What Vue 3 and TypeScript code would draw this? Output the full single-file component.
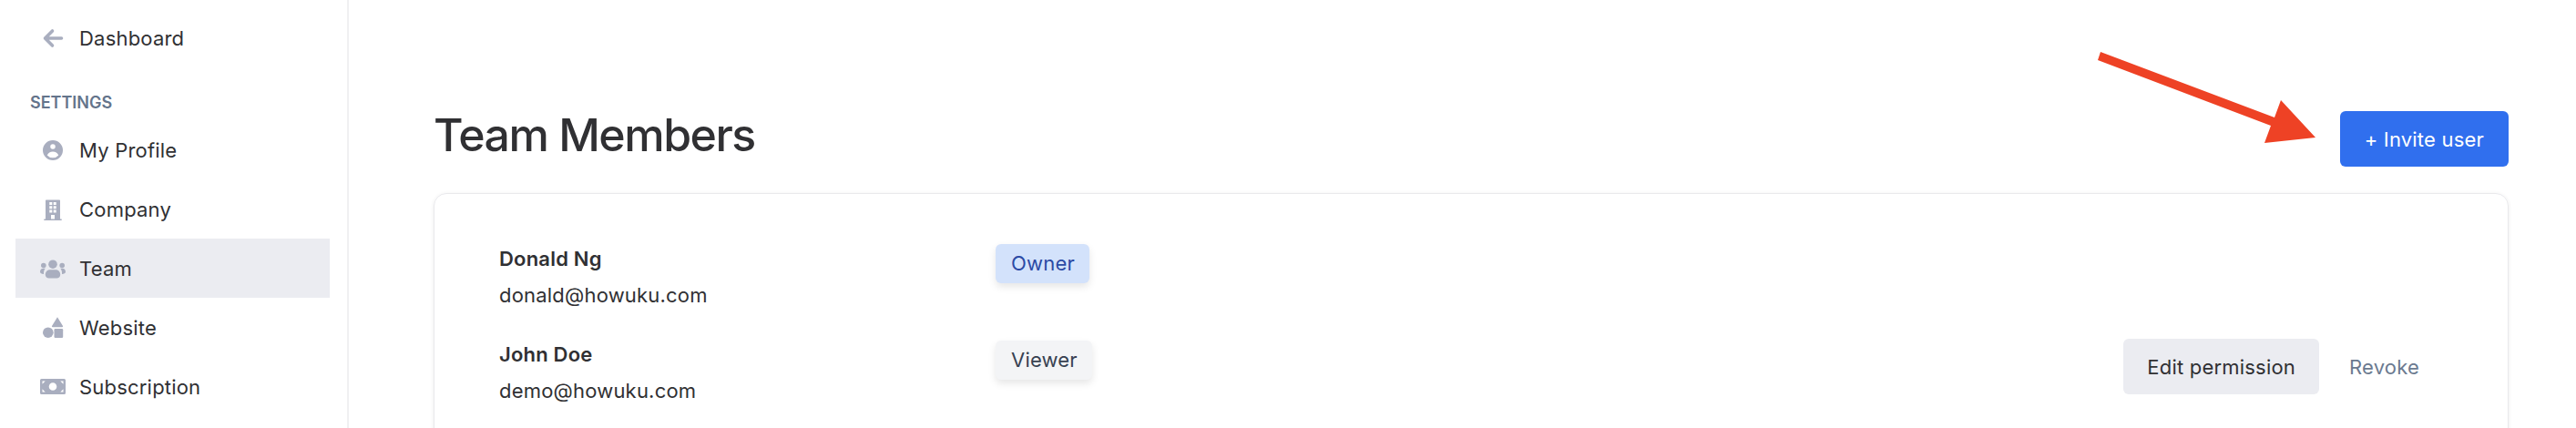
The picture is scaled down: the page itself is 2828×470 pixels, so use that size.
<script setup lang="ts">
const navItems = [
  { label: 'My Profile', icon: 'profile' },
  { label: 'Company', icon: 'company' },
  { label: 'Team', icon: 'team', active: true },
  { label: 'Website', icon: 'website' },
  { label: 'Subscription', icon: 'subscription' },
]

const members = [
  { name: 'Donald Ng', email: 'donald@howuku.com', role: 'Owner', owner: true },
  { name: 'John Doe', email: 'demo@howuku.com', role: 'Viewer', owner: false },
]
</script>

<template>
  <div class="page">
    <aside class="sidebar">
      <a class="nav-row back">
        <svg class="icon" viewBox="0 0 28 28">
          <path d="M13.5 6 5.5 14l8 8M6 14h17.5" fill="none" stroke="currentColor" stroke-width="3.6" stroke-linecap="round" stroke-linejoin="round" />
        </svg>
        Dashboard
      </a>
      <div class="section-label">SETTINGS</div>
      <a v-for="item in navItems" :key="item.label" class="nav-row" :class="{ active: item.active }">
        <svg class="icon" viewBox="0 0 28 28" fill="currentColor">
          <g v-if="item.icon === 'profile'" transform="translate(0.25 0.25) scale(1.375)">
            <path fill-rule="evenodd" d="M18 10a8 8 0 11-16 0 8 8 0 0116 0zm-6-3a2 2 0 11-4 0 2 2 0 014 0zm-2 4a5 5 0 00-4.546 2.916A5.986 5.986 0 0010 16a5.986 5.986 0 004.546-2.084A5 5 0 0010 11z" />
          </g>
          <g v-else-if="item.icon === 'company'">
            <path fill-rule="evenodd" d="M6.800 3.500h14.400a.8.8 0 0 1 .8.800V24.400h1.700V26H4.300v-1.600H6V4.300a.8.8 0 0 1 .8-.8zM10.300 6v3h3V6zm4.400 0v3h3V6zm-4.400 4.300v3h3v-3zm4.400 0v3h3v-3zm-4.400 4.300v3h3v-3zm4.400 0v3h3v-3zM12 20v4.400h4V20z" />
          </g>
          <g v-else-if="item.icon === 'team'">
            <circle cx="14" cy="9.200" r="4.800" />
            <circle cx="3.800" cy="10.500" r="2.800" />
            <circle cx="24.200" cy="10.500" r="2.800" />
            <path d="M5.800 20.500c0-3.400 2.600-5.300 5.200-5.300h6c2.600 0 5.200 1.900 5.200 5.300 0 2.600-1.700 4-4 4H9.800c-2.300 0-4-1.400-4-4z" />
            <path d="M0 17.600c0-2.300 1.500-3.800 3.400-3.800h2.400c-1.200 1.200-1.800 2.900-1.800 4.800v1.300c-2.400-.1-4-.6-4-2.300z" />
            <path d="M28 17.600c0-2.300-1.500-3.800-3.400-3.800h-2.400c1.200 1.200 1.800 2.900 1.800 4.800v1.300c2.400-.1 4-.6 4-2.300z" />
          </g>
          <g v-else-if="item.icon === 'website'">
            <path d="M19 2.200 25 12a.8.8 0 0 1-.7 1.200H13.700a.8.8 0 0 1-.7-1.200z" />
            <circle cx="8.800" cy="19.200" r="5.800" />
            <rect x="15.500" y="15" width="9.700" height="10" rx="1.200" />
          </g>
          <g v-else>
            <path fill-rule="evenodd" d="M1.500 5h25A1.500 1.500 0 0 1 28 6.500v14a1.500 1.500 0 0 1-1.500 1.500h-25A1.500 1.500 0 0 1 0 20.500v-14A1.500 1.500 0 0 1 1.500 5zM14 9.200a4.300 4.300 0 1 0 0 8.600 4.300 4.300 0 0 0 0-8.600zM2.500 7.500v3.200l3.200-3.200zm23 0h-3.200l3.200 3.200zm-23 12h3.200l-3.200-3.200zm23 0v-3.200l-3.200 3.200z" />
          </g>
        </svg>
        {{ item.label }}
      </a>
    </aside>

    <main class="content">
      <header class="heading">
        <h1>Team Members</h1>
        <button class="invite">+ Invite user</button>
      </header>

      <section class="card">
        <div v-for="member in members" :key="member.email" class="member">
          <div class="identity">
            <div class="name">{{ member.name }}</div>
            <div class="email">{{ member.email }}</div>
          </div>
          <span class="badge" :class="{ owner: member.owner }">{{ member.role }}</span>
          <div v-if="!member.owner" class="actions">
            <button class="edit">Edit permission</button>
            <button class="revoke">Revoke</button>
          </div>
        </div>
      </section>
    </main>

    <svg class="annotation" width="2828" height="470" viewBox="0 0 2828 470">
      <polygon points="2306,57 2303,66 2493,138 2486,157 2542,151 2504,110 2497,129" fill="#ee4225" />
    </svg>
  </div>
</template>

<style>
html,
body {
  margin: 0;
  overflow: hidden;
  background: #fff;
}
</style>

<style scoped>
.page {
  position: relative;
  display: flex;
  width: 2828px;
  height: 470px;
  overflow: hidden;
  font-family: Inter, "Liberation Sans", sans-serif;
  font-size: 22px;
  letter-spacing: 0.2px;
  color: #303033;
}

.sidebar {
  box-sizing: border-box;
  flex: none;
  width: 383px;
  padding: 9px 19px 0 17px;
  border-right: 2px solid #f0f0f2;
}

.nav-row {
  display: flex;
  align-items: center;
  gap: 15px;
  height: 65px;
  padding-left: 27px;
}

.section-label + .nav-row,
.section-label + .nav-row + .nav-row {
  height: 64.5px;
}

.nav-row.active {
  background: #ebecf1;
}

.icon {
  flex: none;
  width: 28px;
  height: 28px;
  color: #a9aebf;
}

.section-label {
  margin: 26px 0 7px 16px;
  font-size: 18px;
  font-weight: 600;
  line-height: 26px;
  letter-spacing: 0;
  color: #64748b;
}

.content {
  flex: 1;
  padding: 122px 74px 0 93px;
}

.heading {
  display: flex;
  justify-content: space-between;
  align-items: flex-start;
}

h1 {
  margin: 0;
  font-size: 50px;
  font-weight: 500;
  line-height: 52px;
  letter-spacing: -1.5px;
}

button {
  font: inherit;
  letter-spacing: 0.2px;
  height: 61px;
  padding: 0 27px;
  border: none;
  border-radius: 6px;
}

.invite {
  padding: 0 27px;
  background: #306fee;
  color: #fff;
}

.card {
  box-sizing: border-box;
  height: 400px;
  margin-top: 29px;
  padding: 55px 70px 55px 71px;
  border: 1px solid #e9e9ec;
  border-radius: 14px;
  box-shadow: 0 1px 4px rgba(0, 0, 0, 0.08);
}

.member {
  display: flex;
  align-items: flex-start;
  height: 105px;
}

.identity {
  flex: none;
  width: 545px;
  line-height: 32px;
}

.name {
  margin-bottom: 8px;
  font-weight: 600;
}

.badge {
  margin-top: 1px;
  padding: 5px 16px 5px 17px;
  border-radius: 6px;
  line-height: 33px;
  background: #f3f4f6;
  color: #374151;
  box-shadow: 0 4px 8px rgba(0, 0, 0, 0.1);
}

.badge.owner {
  margin-top: 0;
  background: #d3e2fb;
  color: #2b4aa5;
}

.actions {
  display: flex;
  gap: 6px;
  margin-left: auto;
  margin-top: -1px;
}

.edit {
  padding: 0 26px;
  background: #ebecf1;
  color: #303033;
}

.revoke {
  background: none;
  color: #6b7a90;
}

.annotation {
  position: absolute;
  top: 0;
  left: 0;
  pointer-events: none;
}
</style>
